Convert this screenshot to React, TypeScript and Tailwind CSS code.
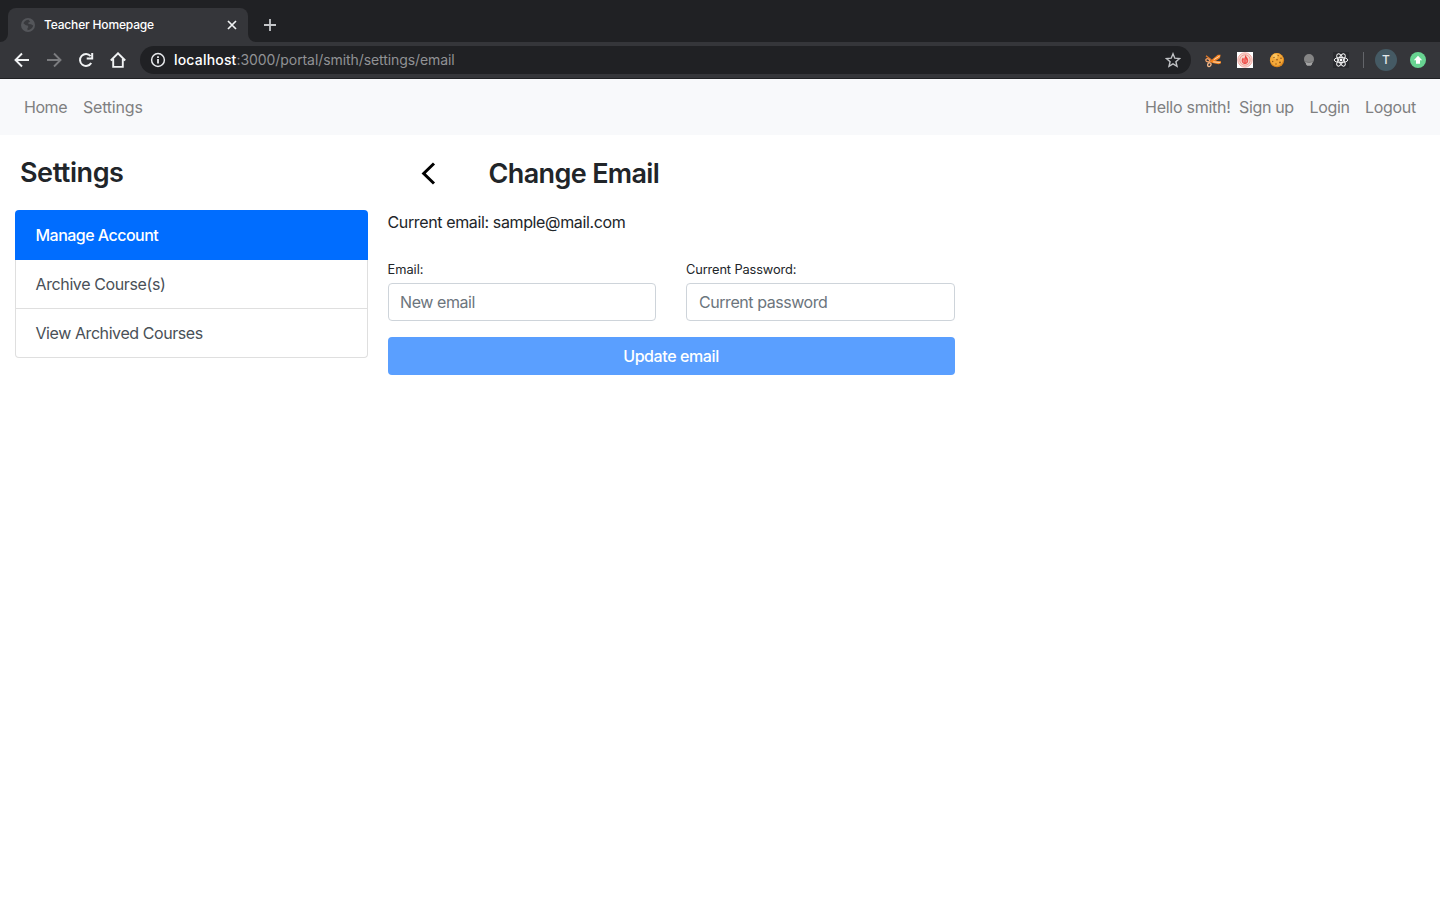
import type { ReactNode } from "react";

function Glyph({ d, className = "", w = 2 }: { d: string; className?: string; w?: number }) {
  return (
    <svg viewBox="0 0 16 16" className={"size-4 shrink-0 " + className} fill="none" stroke="currentColor" strokeWidth={w}>
      <path d={d} />
    </svg>
  );
}

function ScissorsIcon() {
  return (
    <svg viewBox="0 0 16 16" className="size-4" fill="none">
      <path d="M5.500 9L8.500 6.200L12.800 2.800L15.600 2.800L15 6L11.500 8.600L7 10.200Z" fill="#f58220" />
      <path d="M4.500 8.300l5 .7 6.500.2v2l-2.500 1.100-4.700-1L4.500 10Z" fill="#f7851f" />
      <path d="M8.800 7.700l5.900-3.700M8.200 9.900l7 .5" stroke="#fde3c6" strokeWidth=".9" />
      <path d="M1 3.700l5.500 4.300" stroke="#e87a25" strokeWidth="1.300" />
      <ellipse cx="2.700" cy="8.300" rx="1.900" ry="1.500" stroke="#f3a268" strokeWidth="1.300" transform="rotate(18 2.700 8.300)" />
      <ellipse cx="4.300" cy="12.700" rx="1.600" ry="1.900" stroke="#f6b98a" strokeWidth="1.300" transform="rotate(30 4.300 12.700)" />
    </svg>
  );
}

function FlameIcon() {
  return (
    <svg viewBox="0 0 16 16" className="size-4" fill="none">
      <path d="M0 0h16v16H0Z" fill="#fff" />
      <circle cx="8" cy="8" r="7.200" fill="#f6d8cf" stroke="#f6aaa5" strokeWidth="1" />
      <circle cx="8" cy="8" r="5.200" stroke="#f29d96" strokeWidth="1" />
      <path d="M8.300 2.700c.4 1.900 2.900 3 2.900 5.800 0 2-1.300 3.500-3.200 3.500s-3.300-1.400-3.300-3.300c0-1.500.8-2.300 1.300-3.100l.9 1.500c.8-1.200 1.300-2.500 1.400-4.400Z" fill="#ee4540" />
      <path d="M6.300 7.500v3M8 6.500v4.200M9.700 7.700v2.700" stroke="#f8c3ba" strokeWidth=".6" />
    </svg>
  );
}

function CookieIcon() {
  return (
    <svg viewBox="0 0 16 16" className="size-4">
      <circle cx="8" cy="8.200" r="7.100" fill="#d9851c" />
      <circle cx="7.600" cy="7.500" r="6.400" fill="#f4a93a" />
      <circle cx="6" cy="4.500" r="2.400" fill="#fbc561" />
      <g fill="#8a5118">
        <circle cx="5" cy="5.500" r=".7" /><circle cx="9.200" cy="3.600" r=".7" /><circle cx="12" cy="6.300" r=".8" />
        <circle cx="8" cy="7.800" r=".8" /><circle cx="3.700" cy="9.500" r=".7" /><circle cx="11" cy="10.400" r=".9" /><circle cx="7" cy="12" r=".7" />
      </g>
    </svg>
  );
}

function BulbIcon() {
  return (
    <svg viewBox="0 0 16 16" className="size-4">
      <path d="M8 2a5 5 0 0 1 5 5c0 2-.8 3-1.500 4h-7C3.800 10 3 9 3 7a5 5 0 0 1 5-5Z" fill="#858585" />
      <path d="M4.500 9.200c2 1.300 5 1.300 7 0l-.5 3.300-1.300 1.300H6.300L5 12.500Z" fill="#a5a5a5" />
      <path d="M4.300 9.400c2.200 1.400 5.200 1.400 7.400 0" stroke="#6c6c6c" strokeWidth=".9" fill="none" />
    </svg>
  );
}

function AtomIcon() {
  return (
    <svg viewBox="0 0 16 16" className="size-4" fill="none" stroke="#f4f4f4" strokeWidth="1">
      <path d="M0 0h16v16H0Z" fill="#2a2b2f" stroke="none" />
      <ellipse cx="8" cy="8" rx="6.800" ry="2.600" />
      <ellipse cx="8" cy="8" rx="6.800" ry="2.600" transform="rotate(60 8 8)" />
      <ellipse cx="8" cy="8" rx="6.800" ry="2.600" transform="rotate(120 8 8)" />
      <circle cx="8" cy="8" r="1.400" fill="#fff" stroke="none" />
    </svg>
  );
}

function BrowserChrome() {
  return (
    <header className="h-[79px] border-b border-[#202124] bg-[#35363a]">
      <div className="flex h-[42px] items-end bg-[#202124]">
        <div className="relative ml-2 flex h-[34px] w-60 items-center rounded-t-lg bg-[#35363a] pl-[13px] pr-2">
          <svg viewBox="0 0 8 8" className="absolute -left-2 bottom-0 size-2"><path d="M8 0v8H0a8 8 0 0 0 8-8Z" fill="#35363a" /></svg>
          <svg viewBox="0 0 8 8" className="absolute -right-2 bottom-0 size-2"><path d="M0 0v8h8a8 8 0 0 1-8-8Z" fill="#35363a" /></svg>
          <svg viewBox="0 0 14 14" className="size-3.5 shrink-0">
            <circle cx="7" cy="7" r="7" fill="#54565a" />
            <path d="M7.500 1.800C5 2 3.600 3.200 2.400 5.200l2.500 2.100 1.700.2.8 1.600-1 1.200.2 1.900C9.200 12 11.800 10 12.200 7.500L10 6.300 7.600 6l-.5-1.300 2-.9Z" fill="#35363a" opacity=".9" />
          </svg>
          <span className="ml-[9px] grow whitespace-nowrap text-xs font-medium tracking-[-0.170px] text-white">Teacher Homepage</span>
          <Glyph d="M4 4l8 8M12 4l-8 8" w={1.7} className="text-[#f1f3f4]" />
        </div>
        <Glyph d="M8 2v12M2 8h12" w={1.8} className="mb-[9px] ml-[14px] text-[#c5c7ca]" />
      </div>
      <div className="flex h-9 items-center pl-3.5">
        <div className="flex gap-4 text-[#f1f3f4]">
          <Glyph d="M15 8H2M8 1.500L1.500 8L8 14.500" w={1.9} />
          <Glyph d="M1 8h13M8 1.500L14.500 8L8 14.500" w={1.9} className="text-[#7b7c7f]" />
          <Glyph d="M13.200 11A6 6 0 1 1 12.600 4.100M14.200 1v5.500H8.700" />
          <Glyph d="M.8 8.500L8 1.300l7.200 7.200M3.200 7v7.900h9.600V7" w={1.9} />
        </div>
        <div className="ml-3.5 flex h-7 w-[1051px] items-center rounded-full bg-[#202124] px-2.5">
          <svg viewBox="0 0 16 16" className="size-4 shrink-0 text-[#e8eaed]" fill="none" stroke="currentColor" strokeWidth="1.500">
            <circle cx="8" cy="8" r="6.400" /><path d="M8 7v4.500M8 4.300v1.700" strokeWidth="1.800" />
          </svg>
          <span className="ml-2 grow whitespace-nowrap text-sm text-[#919295]">
            <span className="font-medium tracking-[0.190px] text-white">localhost</span>
            <span className="tracking-[-0.080px]">:3000/portal/smith/settings/email</span>
          </span>
          <svg viewBox="0 0 16 16" className="size-4 text-[#c0c2c5]" fill="none" stroke="currentColor" strokeWidth="1.400"><path d="M8 1.800l1.800 4.400 4.700.4-3.600 3.100 1.100 4.600L8 11.800l-4 2.500 1.100-4.600L1.500 6.600l4.700-.4Z" /></svg>
        </div>
        <div className="ml-3.5 flex items-center gap-4">
          <ScissorsIcon />
          <FlameIcon />
          <CookieIcon />
          <BulbIcon />
          <AtomIcon />
        </div>
        <div className="ml-3.5 h-4 w-px bg-[#63656a]" />
        <div className="ml-[11px] flex size-[22px] items-center justify-center rounded-full bg-[#455a64] text-xs font-medium text-[#e3e8ea]">T</div>
        <svg viewBox="0 0 16 16" className="ml-[13px] size-4">
          <circle cx="8" cy="8" r="8" fill="#68d391" />
          <path d="M8 3.800l4.200 4.400H10v3.500H6V8.200H3.800Z" fill="#fff" />
        </svg>
      </div>
    </header>
  );
}

function SiteNav() {
  return (
    <nav className="flex h-14 items-center justify-between bg-[#f8f9fb] px-6 text-[#7f8081]">
      <div className="flex gap-4">
        <a className="w-[43px] whitespace-nowrap tracking-[-0.450px]">Home</a>
        <a className="whitespace-nowrap tracking-[-0.200px]">Settings</a>
      </div>
      <div className="flex whitespace-nowrap">
        <span className="w-[94px] tracking-[-0.260px]">Hello smith!</span>
        <a className="w-[70.500px] tracking-[-0.350px]">Sign up</a>
        <a className="w-[55.500px] tracking-[-0.340px]">Login</a>
        <a className="w-[51px] tracking-[-0.320px]">Logout</a>
      </div>
    </nav>
  );
}

function Sidebar() {
  return (
    <aside className="w-[353px] pt-[18px]">
      <h2 className="pl-[5px] pt-px text-[27px] font-[560] leading-[38px] tracking-[-0.450px]">Settings</h2>
      <ul className="mt-[18px] text-[#495057]">
        <li className="flex h-[50px] items-center rounded-t bg-[#006dff] pl-[20.500px] text-white tracking-[-0.520px] font-[450]">Manage Account</li>
        <li className="flex h-[49px] items-center border-x border-b border-[#dfdfdf] pl-[19.500px] tracking-[-0.380px]">Archive Course(s)</li>
        <li className="flex h-[49px] items-center rounded-b border-x border-b border-[#dfdfdf] pl-[19.500px] tracking-[-0.420px]">View Archived Courses</li>
      </ul>
    </aside>
  );
}

function Field({ label, className, children }: { label: ReactNode; className: string; children: ReactNode }) {
  return (
    <label className={"flex flex-col text-[12.8px] leading-[19px] " + className}>
      {label}
      {children}
    </label>
  );
}

const inputClass =
  "mt-1 h-[38px] w-full rounded border border-[#ced4da] bg-white pb-px text-base placeholder:text-[#6c757d] placeholder:opacity-100";

export default function App() {
  return (
    <div className="h-[900px] overflow-hidden bg-white font-['Inter',sans-serif] text-base text-[#212529]">
      <BrowserChrome />
      <SiteNav />
      <main className="flex pl-[15px]">
        <Sidebar />
        <section className="ml-5 w-[567px] pt-[19px]">
          <div className="flex h-[38px] items-center">
            <svg viewBox="0 0 16 24" className="ml-8 h-6 w-4" fill="none" stroke="#000" strokeWidth="3">
              <path d="M14 2.500L3.700 12.500L14 22.500" />
            </svg>
            <h2 className="ml-[52.500px] pt-px text-[27px] font-[560] leading-[38px] tracking-[-0.640px]">Change Email</h2>
          </div>
          <p className="-ml-[0.500px] mt-[18px] tracking-[-0.370px]">Current email: sample@mail.com</p>
          <form className="mt-[26px]">
            <div className="flex justify-between">
              <Field className="w-[268px]" label={<span className="-ml-[0.500px]">Email:</span>}>
                <input className={inputClass + " px-[11px] tracking-[-0.420px]"} placeholder="New email" />
              </Field>
              <Field className="w-[269px]" label={<span className="tracking-[-0.120px]">Current Password:</span>}>
                <input className={inputClass + " px-3 tracking-[-0.440px]"} placeholder="Current password" type="password" />
              </Field>
            </div>
            <button type="button" className="mt-4 h-[38px] w-full rounded bg-[#5a9fff] pr-px font-[450] tracking-[-0.400px] text-white">Update email</button>
          </form>
        </section>
      </main>
    </div>
  );
}
